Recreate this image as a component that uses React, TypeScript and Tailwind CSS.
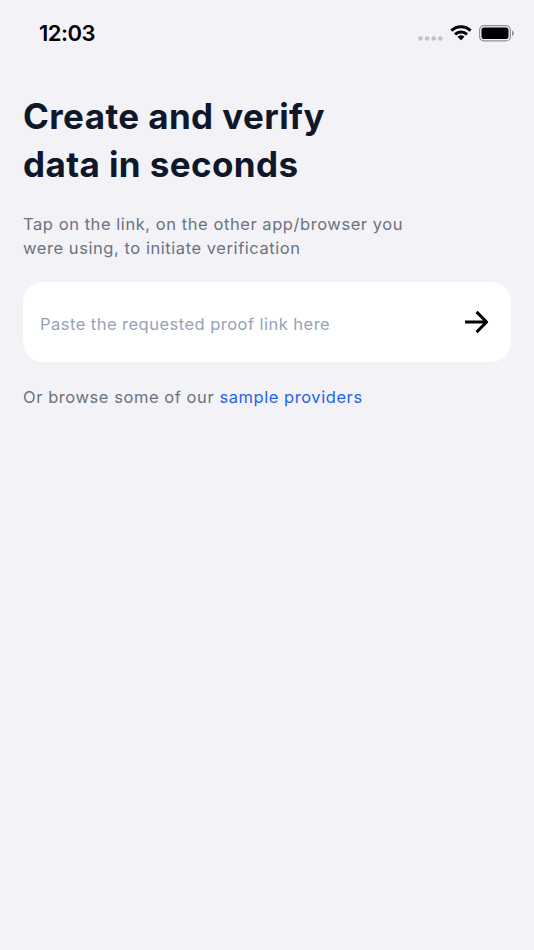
function StatusBar() {
  return (
    <header className="flex h-[66px] items-center justify-between pr-5 pl-[39px] text-black">
      <span className="text-[22px] leading-[26px] font-semibold tracking-[-0.5px]">12:03</span>
      <div className="flex items-center">
        <svg width="25" height="5" viewBox="0 0 25 5" fill="#c3c2c8" className="mt-[11px]">
          <circle cx="2.5" cy="2.5" r="2.3" />
          <circle cx="9.1" cy="2.5" r="2.3" />
          <circle cx="15.7" cy="2.5" r="2.3" />
          <circle cx="22.3" cy="2.5" r="2.3" />
        </svg>
        <svg width="22" height="16" viewBox="0 0 22 16" className="ml-[7px]">
          <g fill="none" stroke="black" strokeWidth="3">
            <path d="M1.4 5.6a13.900 13.900 0 0 1 19.2 0" />
            <path d="M5 9.3a8.700 8.700 0 0 1 12 0" />
          </g>
          <path d="M14.2 12.1c.2-.2.2-.5 0-.6a5 5 0 0 0-6.4 0c-.2.2-.2.4 0 .6l2.900 2.900c.2.2.4.2.6 0z" />
        </svg>
        <svg width="35" height="17" viewBox="0 0 35 17" className="ml-[7px]">
          <rect x=".6" y=".6" width="30.8" height="15.3" rx="4.5" fill="none" stroke="#919095" strokeWidth="1.200" />
          <rect x="2.5" y="2.5" width="27" height="11.5" rx="2.8" />
          <path d="M33 5.500v5.500c1.200-.5 1.900-1.500 1.900-2.750S34.200 6 33 5.500z" fill="#919095" />
        </svg>
      </div>
    </header>
  );
}

export default function App() {
  return (
    <div className="min-h-[950px] bg-[#f2f2f7] font-[Inter,sans-serif]">
      <StatusBar />
      <main className="px-[23px] pt-[26px]">
        <h1 className="text-[35px] leading-[48px] font-[650] tracking-[0.4px] text-[#0f172a]">
          Create and verify
          <br />
          data in seconds
        </h1>
        <p className="mt-6 text-[16.5px] leading-6 tracking-[0.56px] text-[#6b7280]">
          Tap on the link, on the other app/browser you
          <br />
          were using, to initiate verification
        </p>
        <div className="mt-[22px] flex h-20 items-center justify-between rounded-[20px] bg-white pr-[18px] pl-[17px]">
          <input
            className="w-[360px] pt-1 text-[16.5px] tracking-[0.47px] outline-none placeholder:text-[#94a3b8]"
            placeholder="Paste the requested proof link here"
          />
          <button type="button" aria-label="Continue">
            <svg
              width="32"
              height="32"
              viewBox="0 0 24 24"
              fill="none"
              stroke="black"
              strokeWidth="2.2"
              strokeLinejoin="round"
            >
              <path d="M3 12h16.3M11.7 4.4l7.5 7.6-7.5 7.6" />
            </svg>
          </button>
        </div>
        <p className="mt-[23px] text-[16.5px] leading-[25px] tracking-[0.56px] text-[#6b7280]">
          Or browse some of our{" "}
          <a href="#" className="text-[#2563eb]">sample providers</a>
        </p>
      </main>
    </div>
  );
}
